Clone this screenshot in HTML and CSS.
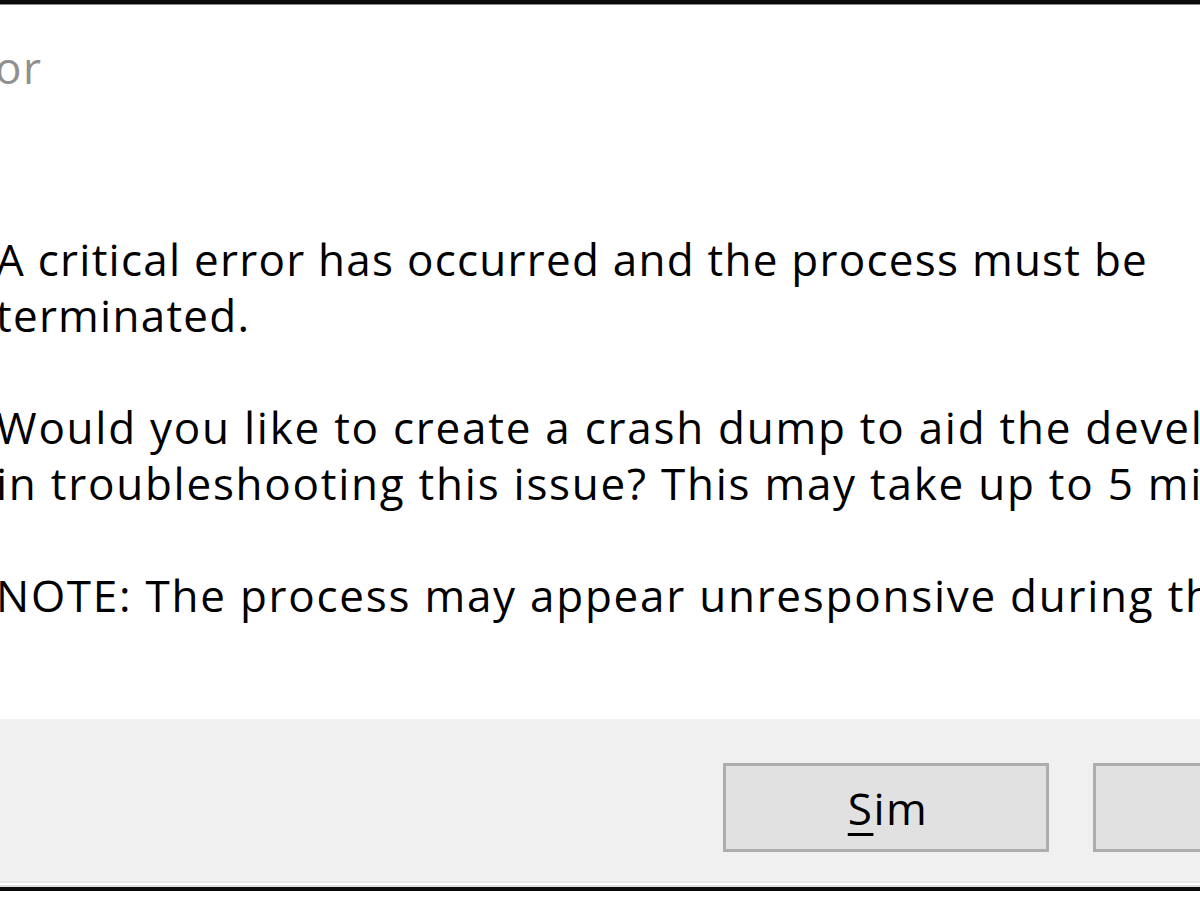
FILE: index.html
```html
<!DOCTYPE html>
<html>
<head>
<meta charset="utf-8">
<link rel="stylesheet" href="styles.css">
</head>
<body>
<div class="dialog">
  <div class="title-bar"><span class="title">Error</span></div>
  <div class="content">
    <p class="msg">A critical error has occurred and the process must be<br>terminated.</p>
    <p class="msg msg-wide">Would you like to create a crash dump to aid the developers<br>in troubleshooting this issue? This may take up to 5 minutes.</p>
    <p class="msg msg-wide">NOTE: The process may appear unresponsive during this time.</p>
  </div>
  <div class="footer">
    <button class="btn"><span class="mn">S</span>im</button>
    <button class="btn">Não</button>
  </div>
  <div class="edge"></div>
</div>
</body>
</html>
```
FILE: styles.css
```css
html, body {
  margin: 0;
  padding: 0;
  width: 1200px;
  height: 900px;
  overflow: hidden;
  background: #ffffff;
}
.dialog {
  width: 1200px;
  height: 900px;
  display: flex;
  flex-direction: column;
  font-family: "Open Sans", "Noto Sans", sans-serif;
  color: #000000;
  border-top: 4px solid #0a0a0a;
  box-sizing: border-box;
}
.title-bar {
  height: 110px;
  border-top: 1px solid #8c8c8c;
  box-sizing: border-box;
  white-space: nowrap;
  overflow: hidden;
}
.title {
  display: inline-block;
  margin-left: -70px;
  margin-top: 34px;
  font-size: 44px;
  line-height: 56px;
  letter-spacing: 1.5px;
  color: #8f8f8f;
}
.content {
  flex: 1;
  padding-top: 117px;
  overflow: hidden;
  white-space: nowrap;
}
.msg {
  margin: 0 0 56px -4px;
  font-size: 44px;
  line-height: 56px;
  letter-spacing: 1.25px;
}
.msg-wide { letter-spacing: 1.75px; }
.msg:last-child { margin-bottom: 0; }
.footer {
  height: 162px;
  flex: none;
  background: #f0f0f0;
  display: flex;
  align-items: flex-start;
  padding: 44px 0 0 723px;
  gap: 44px;
  box-sizing: border-box;
  overflow: hidden;
}
.btn {
  flex: none;
  width: 326px;
  height: 89px;
  border: 3px solid #adadad;
  background: #e1e1e1;
  font-family: "Open Sans", "Noto Sans", sans-serif;
  font-size: 44px;
  color: #000000;
  padding: 0 0 0 4px;
  letter-spacing: 1.5px;
}
.mn { text-decoration: underline; text-underline-offset: 8px; text-decoration-thickness: 3px; }
.edge {
  flex: none;
  height: 19px;
  border-top: 2px solid #e6e6e6;
  box-sizing: border-box;
  background: linear-gradient(#ffffff 0 2px, #dcdcdc 2px 4px, #0a0a0a 4px 8px, #ffffff 8px);
}
```
